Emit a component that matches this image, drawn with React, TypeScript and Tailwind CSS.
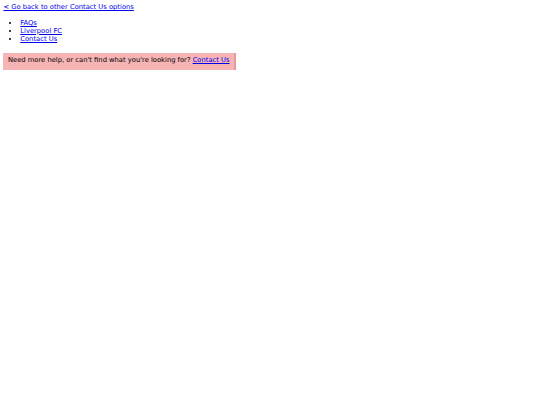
export default function App() {
  return (
    <div className="min-h-screen bg-white px-[3.4px] pt-[4.4px] text-[6.75px] leading-[7.9px] text-black" style={{ fontFamily: '"DejaVu Sans", Verdana, sans-serif' }}>
      <a href="#" className="text-[#0000ee] underline">&lt; Go back to other Contact Us options</a>
      <ul className="mt-[7.6px] list-disc pl-[16.9px]">
        <li><a href="#" className="text-[#0000ee] underline">FAQs</a></li>
        <li><a href="#" className="text-[#0000ee] underline">Liverpool FC</a></li>
        <li><a href="#" className="text-[#0000ee] underline">Contact Us</a></li>
      </ul>
      <div className="mt-[9.4px] inline-block border-r-2 border-[#e89a9a] bg-[#f6b4b4] py-[4.4px] pl-[4.6px] pr-[4.6px]">
        Need more help, or can't find what you're looking for?{' '}
        <a href="#" className="text-[#0000ee] underline">Contact Us</a>
      </div>
    </div>
  );
}
